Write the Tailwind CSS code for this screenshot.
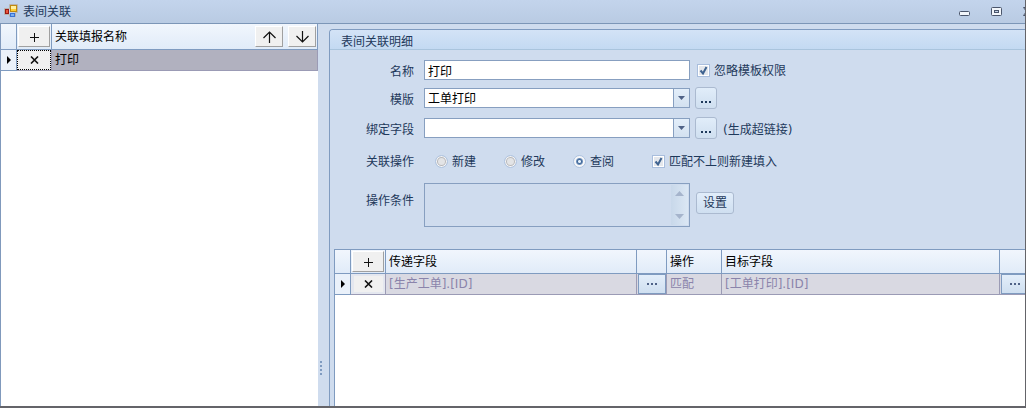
<!DOCTYPE html>
<html lang="zh-CN">
<head>
<meta charset="utf-8">
<title>表间关联</title>
<script src="https://cdn.jsdelivr.net/npm/@tailwindcss/browser@4"></script>
</head>
<body class="font-['DejaVu_Sans','Noto_Sans_CJK_SC',sans-serif] text-[12px] leading-4 text-[#1e395b]">
<div class="flex h-screen flex-col overflow-hidden border-r border-b-2 border-[#646469] bg-[#cfdcee]">
  <header class="flex h-6 shrink-0 items-center overflow-hidden border-b border-[#7c96b7] bg-linear-to-b from-[#c3d4ec] to-[#b9cbe3] pl-1">
    <svg class="mr-1 size-[15px] shrink-0" viewBox="0 0 15 15">
      <path d="M.5 4.500h5v-4h8v8h-2v4h-6v-2h-5z" fill="none" stroke="#b9b2ac"/>
      <rect x="6.500" y="1.500" width="6" height="6" fill="#ffcf33" stroke="#c08a10"/><path d="M7 2h5v3H7z" fill="#fff0a0"/>
      <rect x="1.500" y="5.500" width="3" height="4" fill="#e8573c" stroke="#9c1a14"/>
      <rect x="6.500" y="9.500" width="4" height="3" fill="#79b0f5" stroke="#3a72d4"/>
    </svg>
    <h1 class="flex-1">表间关联</h1>
    <div class="-mr-2.5 flex items-center gap-5">
      <button type="button" aria-label="最小化" class="flex size-3"><svg class="size-3" viewBox="0 0 12 12"><rect x=".5" y="5.500" width="10" height="4" rx="1" fill="#f2f6fb" stroke="#4a556b"/></svg></button>
      <button type="button" aria-label="最大化" class="flex size-3"><svg class="size-3" viewBox="0 0 12 12"><rect x=".5" y="1.500" width="10" height="8" rx="1" fill="#f2f6fb" stroke="#4a556b"/><rect x="3.500" y="4.500" width="4" height="2" fill="#c3d2e8" stroke="#4a556b"/></svg></button>
      <button type="button" aria-label="关闭" class="flex size-3"><svg class="size-3" viewBox="0 0 12 12"><path d="M.5 1.500h3l2 2.500 2-2.500h3L7.500 5.500l3 4h-3L5.500 7l-2 2.500h-3l3-4z" fill="#f2f6fb" stroke="#4a556b"/></svg></button>
    </div>
  </header>

  <main class="flex min-h-0 flex-1">
    <aside class="w-[318px] shrink-0 border-l border-[#8099bc] bg-white text-black">
      <table class="w-full table-fixed border-separate border-spacing-0">
        <colgroup><col class="w-4"><col class="w-[35px]"><col></colgroup>
        <thead>
          <tr class="h-[26px] bg-linear-to-b from-[#f1f6fd] to-[#e0ebf8]">
            <th class="border-r border-b border-[#7f9bc0] p-0"></th>
            <th class="border-r border-b border-[#7f9bc0] p-0">
              <button type="button" aria-label="添加" class="mx-auto flex h-[21px] w-8 items-center justify-center border border-t-white border-r-[#a0a0a0] border-b-[#a0a0a0] border-l-white bg-[#f0f0f0] pt-0.5"><svg class="size-[9px]" viewBox="0 0 9 9"><path d="M4.500 0v9M0 4.500h9" stroke="#111"/></svg></button>
            </th>
            <th class="border-r border-b border-[#7f9bc0] p-0 pr-px pl-[3px] text-left font-normal">
              <div class="flex items-center">
                <span class="flex-1 pt-px">关联填报名称</span>
                <button type="button" aria-label="上移" class="mr-[5px] flex h-[21px] w-7 items-center justify-center border border-t-white border-r-[#a0a0a0] border-b-[#a0a0a0] border-l-white bg-[#f0f0f0]"><svg class="h-3 w-[13px]" viewBox="0 0 13 12"><path d="M6.500 12V1M.5 7l6-6 6 6" fill="none" stroke="#111" stroke-width="1.200"/></svg></button>
                <button type="button" aria-label="下移" class="flex h-[21px] w-7 items-center justify-center border border-t-white border-r-[#a0a0a0] border-b-[#a0a0a0] border-l-white bg-[#f0f0f0]"><svg class="h-3 w-[13px]" viewBox="0 0 13 12"><path d="M6.500 0v11M.5 5l6 6 6-6" fill="none" stroke="#111" stroke-width="1.200"/></svg></button>
              </div>
            </th>
          </tr>
        </thead>
        <tbody>
          <tr class="h-[21px] bg-[#b1b1bf]">
            <td class="border-r border-b border-[#7f9bc0] bg-[#eaf1fa] p-0"><svg class="mx-auto h-2 w-1" viewBox="0 0 4 8"><path d="M0 0l4 4-4 4z"/></svg></td>
            <td class="border-r border-b border-[#9b9bb5] p-0"><button type="button" aria-label="删除" class="flex h-5 w-full items-center justify-center border border-dotted border-black bg-[#f0f0f0]"><svg class="h-2 w-[9px]" viewBox="0 0 9 8"><path d="M1 .5l7 7M8 .5l-7 7" stroke="#111" stroke-width="1.600"/></svg></button></td>
            <td class="border-r border-b border-[#9b9bb5] p-0 pl-[3px]">打印</td>
          </tr>
        </tbody>
      </table>
    </aside>

    <div class="flex w-[11px] shrink-0 flex-col gap-0.5 pt-[337px] pl-0.5" role="separator">
      <i class="size-0.5 bg-[#7f9bc0]"></i><i class="size-0.5 bg-[#7f9bc0]"></i><i class="size-0.5 bg-[#7f9bc0]"></i><i class="size-0.5 bg-[#7f9bc0]"></i>
    </div>

    <section class="mt-[5px] flex min-w-0 flex-1 flex-col overflow-hidden rounded-tl-sm border-t border-l border-[#7f9bc0]">
      <h2 class="flex h-5 shrink-0 items-center border-b border-[#a9c4dd] bg-linear-to-b from-[#d3e3f6] to-[#c3d9f2] pt-1 pl-[11px]">表间关联明细</h2>

      <form class="shrink-0 pl-9">
        <div class="mt-[9px] flex h-[22px] items-center">
          <label for="name" class="w-[58px] pt-1 pr-2.5 text-right">名称</label>
          <input id="name" type="text" value="打印" class="h-5 w-[266px] border border-[#879fc0] bg-white pl-[3px] text-black">
          <label class="ml-[7px] flex items-center gap-1">
            <span class="grid"><input type="checkbox" checked class="peer col-start-1 row-start-1 size-[13px] appearance-none border border-[#a9bedd] bg-[#e4e7ec] shadow-[inset_0_0_0_1px_#fff]"><svg class="pointer-events-none invisible col-start-1 row-start-1 size-[13px] peer-checked:visible" viewBox="0 0 13 13"><path d="M3.500 6.500l2.500 3L9.500 3" fill="none" stroke="#3f6390" stroke-width="2"/></svg></span>
            <span class="pt-0.5">忽略模板权限</span>
          </label>
        </div>
        <div class="mt-[6px] flex h-[22px] items-center">
          <label for="template" class="w-[58px] pt-1 pr-2.5 text-right">模版</label>
          <div class="grid h-5 w-[266px] border border-[#879fc0] bg-white">
            <select id="template" class="col-start-1 row-start-1 appearance-none pt-0.5 pl-[3px] text-black outline-none"><option>工单打印</option></select>
            <span class="pointer-events-none col-start-1 row-start-1 flex w-4 items-center justify-center justify-self-end border-l border-[#879fc0] bg-linear-to-b from-[#e3eefa] to-[#d3e1f0]"><svg class="h-1 w-[7px]" viewBox="0 0 7 4"><path d="M0 0h7L3.500 4z" fill="#4f6287"/></svg></span>
          </div>
          <button type="button" aria-label="选择模版" class="ml-[5px] flex size-[22px] items-end justify-center gap-0.5 rounded-[3px] border border-[#abbad0] bg-linear-to-b from-[#e1edfa] to-[#cfdff0] pb-[5px]"><i class="size-0.5 bg-[#1e395b]"></i><i class="size-0.5 bg-[#1e395b]"></i><i class="size-0.5 bg-[#1e395b]"></i></button>
        </div>
        <div class="mt-2 flex h-[22px] items-center">
          <label for="field" class="w-[58px] pt-1 pr-2.5 text-right">绑定字段</label>
          <div class="grid h-5 w-[266px] border border-[#879fc0] bg-white">
            <select id="field" class="col-start-1 row-start-1 appearance-none pt-0.5 pl-[3px] text-black outline-none"><option></option></select>
            <span class="pointer-events-none col-start-1 row-start-1 flex w-4 items-center justify-center justify-self-end border-l border-[#879fc0] bg-linear-to-b from-[#e3eefa] to-[#d3e1f0]"><svg class="h-1 w-[7px]" viewBox="0 0 7 4"><path d="M0 0h7L3.500 4z" fill="#4f6287"/></svg></span>
          </div>
          <button type="button" aria-label="选择字段" class="ml-[5px] flex size-[22px] items-end justify-center gap-0.5 rounded-[3px] border border-[#abbad0] bg-linear-to-b from-[#e1edfa] to-[#cfdff0] pb-[5px]"><i class="size-0.5 bg-[#1e395b]"></i><i class="size-0.5 bg-[#1e395b]"></i><i class="size-0.5 bg-[#1e395b]"></i></button>
          <span class="ml-1.5 pt-1">(生成超链接)</span>
        </div>
        <fieldset class="mt-3 flex h-5 items-center">
          <span class="w-[58px] pt-0.5 pr-2.5 text-right">关联操作</span>
          <label class="ml-[11px] flex w-[69px] items-center gap-1"><input type="radio" name="op" class="size-[13px] appearance-none rounded-full border border-[#aec3e0] bg-[#e3e4e6] shadow-[inset_0_0_0_1px_#f5f6f8,inset_0_0_0_2px_#b8b8ba]"><span class="pt-0.5">新建</span></label>
          <label class="flex w-[69px] items-center gap-1"><input type="radio" name="op" class="size-[13px] appearance-none rounded-full border border-[#aec3e0] bg-[#e3e4e6] shadow-[inset_0_0_0_1px_#f5f6f8,inset_0_0_0_2px_#b8b8ba]"><span class="pt-0.5">修改</span></label>
          <label class="flex w-[79px] items-center gap-1"><input type="radio" name="op" checked class="size-[13px] appearance-none rounded-full border border-[#aec3e0] bg-[radial-gradient(#e3f0fb_1px,#42689a_2px,#6d8fb8_3px,#f5f6f8_4px)]"><span class="pt-0.5">查阅</span></label>
          <label class="flex items-center gap-1">
            <span class="grid"><input type="checkbox" checked class="peer col-start-1 row-start-1 size-[13px] appearance-none border border-[#a9bedd] bg-[#e4e7ec] shadow-[inset_0_0_0_1px_#fff]"><svg class="pointer-events-none invisible col-start-1 row-start-1 size-[13px] peer-checked:visible" viewBox="0 0 13 13"><path d="M3.500 6.500l2.500 3L9.500 3" fill="none" stroke="#3f6390" stroke-width="2"/></svg></span>
            <span class="pt-0.5">匹配不上则新建填入</span>
          </label>
        </fieldset>
        <div class="mt-3 flex h-11 items-start">
          <label for="cond" class="w-[58px] pt-2.5 pr-2.5 text-right">操作条件</label>
          <div class="flex h-11 w-[266px] border border-[#879fc0]">
            <textarea id="cond" readonly class="min-w-0 flex-1 resize-none outline-none"></textarea>
            <span class="my-px mr-px flex w-[17px] flex-col items-center justify-between bg-linear-to-r from-[#c8d8ea] to-[#dbe7f4] py-[6px]">
              <svg class="h-[5px] w-[9px]" viewBox="0 0 9 5"><path d="M0 5h9L4.500 0z" fill="#a5b4cc"/></svg>
              <svg class="h-[5px] w-[9px]" viewBox="0 0 9 5"><path d="M0 0h9L4.500 5z" fill="#a5b4cc"/></svg>
            </span>
          </div>
          <button type="button" class="mt-[9px] ml-1.5 h-[22px] w-[38px] rounded-[3px] border border-[#abbad0] bg-linear-to-b from-[#e1edfa] to-[#cfdff0]">设置</button>
        </div>
      </form>

      <div class="mt-[22px] ml-1 flex-1 border-t border-l border-[#7f9bc0] bg-white">
        <table class="w-full table-fixed border-separate border-spacing-0 text-black">
          <colgroup><col class="w-4"><col class="w-[35px]"><col class="w-[251px]"><col class="w-[30px]"><col class="w-[55px]"><col><col class="w-[25px]"></colgroup>
          <thead>
            <tr class="h-6 bg-linear-to-b from-[#f1f6fd] to-[#e0ebf8] text-left">
              <th class="border-r border-b border-[#7f9bc0] p-0"></th>
              <th class="border-r border-b border-[#7f9bc0] p-0"><button type="button" aria-label="添加" class="mx-auto flex h-[21px] w-8 items-center justify-center border border-t-white border-r-[#a0a0a0] border-b-[#a0a0a0] border-l-white bg-[#f0f0f0] pt-0.5"><svg class="size-[9px]" viewBox="0 0 9 9"><path d="M4.500 0v9M0 4.500h9" stroke="#111"/></svg></button></th>
              <th class="border-r border-b border-[#7f9bc0] p-0 pl-[3px] font-normal">传递字段</th>
              <th class="border-r border-b border-[#7f9bc0] p-0"></th>
              <th class="border-r border-b border-[#7f9bc0] p-0 pl-[3px] font-normal">操作</th>
              <th class="border-r border-b border-[#7f9bc0] p-0 pl-[3px] font-normal">目标字段</th>
              <th class="border-b border-[#7f9bc0] p-0"></th>
            </tr>
          </thead>
          <tbody>
            <tr class="h-[21px] bg-[#d9d9e2] text-[#8a84ab]">
              <td class="border-r border-b border-[#7f9bc0] bg-[#eaf1fa] p-0"><svg class="mx-auto h-2 w-1" viewBox="0 0 4 8"><path d="M0 0l4 4-4 4z"/></svg></td>
              <td class="border-r border-b border-[#9b9bb5] bg-[#e4e7ef] p-0"><button type="button" aria-label="删除" class="mx-auto flex h-4 w-[29px] items-center justify-center bg-[#f0f0f0]"><svg class="h-2 w-[9px]" viewBox="0 0 9 8"><path d="M1 .5l7 7M8 .5l-7 7" stroke="#111" stroke-width="1.600"/></svg></button></td>
              <td class="border-r border-b border-[#9b9bb5] p-0 pl-[3px]">[生产工单].[ID]</td>
              <td class="border-r border-b border-[#9b9bb5] p-0"><button type="button" aria-label="选择传递字段" class="ml-px flex h-5 w-7 items-center justify-center gap-0.5 border border-[#7f9bc0] bg-linear-to-b from-[#e3eefa] to-[#cfdff0]"><i class="size-0.5 bg-[#4f6287]"></i><i class="size-0.5 bg-[#4f6287]"></i><i class="size-0.5 bg-[#4f6287]"></i></button></td>
              <td class="border-r border-b border-[#9b9bb5] p-0 pl-[3px]">匹配</td>
              <td class="border-r border-b border-[#9b9bb5] p-0 pl-[3px]">[工单打印].[ID]</td>
              <td class="overflow-hidden border-b border-[#9b9bb5] p-0"><button type="button" aria-label="选择目标字段" class="ml-px flex h-5 w-7 items-center justify-center gap-0.5 border border-[#7f9bc0] bg-linear-to-b from-[#e3eefa] to-[#cfdff0]"><i class="size-0.5 bg-[#4f6287]"></i><i class="size-0.5 bg-[#4f6287]"></i><i class="size-0.5 bg-[#4f6287]"></i></button></td>
            </tr>
          </tbody>
        </table>
      </div>
    </section>
  </main>
</div>
</body>
</html>
